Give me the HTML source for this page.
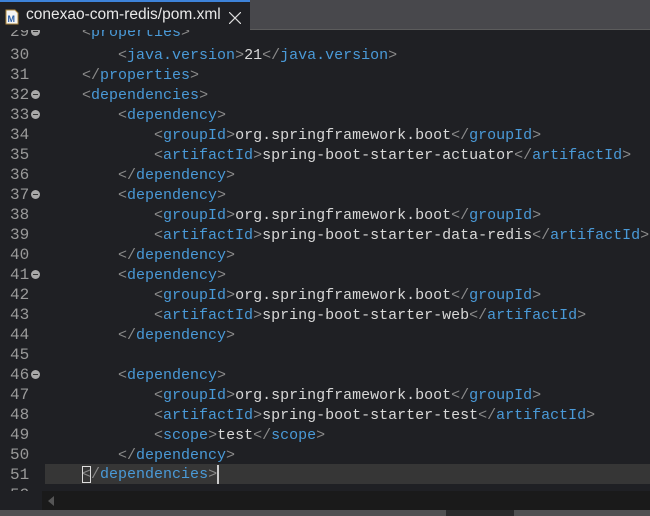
<!DOCTYPE html><html><head><style>
*{margin:0;padding:0}
body{width:650px;height:516px;overflow:hidden;background:#1f2024;position:relative;font-family:"Liberation Mono",monospace;font-size:15px}
.tabbar{position:absolute;left:0;top:0;width:650px;height:29px;background:#48484c;border-bottom:1px solid #5c5c5c}
.tab{position:absolute;left:0;top:0;width:250px;height:30px;background:#1f2024;border-top:2px solid #3d82d8;box-sizing:border-box}
.tab span{position:absolute;left:26px;top:4px;font-family:"Liberation Sans",sans-serif;font-size:15.5px;color:#e8e8e8}
.ed{position:absolute;left:0;top:30px;width:650px;height:461px;overflow:hidden}
.l{position:absolute;left:0;height:20px;line-height:20px;white-space:pre;width:650px}
.n{position:absolute;left:10px;top:1px;color:#9a9a9a;font-size:16px}
.c{position:absolute;left:46px;top:2px;color:#d8d8d8}
.b{color:#8a8a8a}.t{color:#4a9ad8}
.f{position:absolute;left:31px;top:6px;width:9px;height:9px;border-radius:50%;background:#a8a8a8}
.f:after{content:"";position:absolute;left:2px;top:4px;width:5px;height:1px;background:#333}
.hl{position:absolute;left:45px;top:434px;width:605px;height:20px;background:#363636}
</style></head><body>
<div class="tabbar"></div>
<div class="tab"><svg style="position:absolute;left:5px;top:7px" width="14" height="16"><path d="M1 1h9l3 3v11H1z" fill="#f4f4f4" stroke="#b08a40"/><text x="2.5" y="13" font-size="9" font-family="Liberation Sans" font-weight="bold" fill="#2c5fa8">M</text></svg><span>conexao-com-redis/pom.xml</span>
<svg style="position:absolute;left:229px;top:10px" width="12" height="12"><path d="M0 0L12 12M12 0L0 12" stroke="#ddd" stroke-width="1.2"/></svg></div>
<div class="ed">
<div class="hl"></div>
<div class="l" style="top:-9px"><span class="n">29</span><i class="f"></i><span class="c">    <span class="b">&lt;</span><span class="t">properties</span><span class="b">&gt;</span></span></div>
<div class="l" style="top:14px"><span class="n">30</span><span class="c">        <span class="b">&lt;</span><span class="t">java.version</span><span class="b">&gt;</span>21<span class="b">&lt;/</span><span class="t">java.version</span><span class="b">&gt;</span></span></div>
<div class="l" style="top:34px"><span class="n">31</span><span class="c">    <span class="b">&lt;/</span><span class="t">properties</span><span class="b">&gt;</span></span></div>
<div class="l" style="top:54px"><span class="n">32</span><i class="f"></i><span class="c">    <span class="b">&lt;</span><span class="t">dependencies</span><span class="b">&gt;</span></span></div>
<div class="l" style="top:74px"><span class="n">33</span><i class="f"></i><span class="c">        <span class="b">&lt;</span><span class="t">dependency</span><span class="b">&gt;</span></span></div>
<div class="l" style="top:94px"><span class="n">34</span><span class="c">            <span class="b">&lt;</span><span class="t">groupId</span><span class="b">&gt;</span>org.springframework.boot<span class="b">&lt;/</span><span class="t">groupId</span><span class="b">&gt;</span></span></div>
<div class="l" style="top:114px"><span class="n">35</span><span class="c">            <span class="b">&lt;</span><span class="t">artifactId</span><span class="b">&gt;</span>spring-boot-starter-actuator<span class="b">&lt;/</span><span class="t">artifactId</span><span class="b">&gt;</span></span></div>
<div class="l" style="top:134px"><span class="n">36</span><span class="c">        <span class="b">&lt;/</span><span class="t">dependency</span><span class="b">&gt;</span></span></div>
<div class="l" style="top:154px"><span class="n">37</span><i class="f"></i><span class="c">        <span class="b">&lt;</span><span class="t">dependency</span><span class="b">&gt;</span></span></div>
<div class="l" style="top:174px"><span class="n">38</span><span class="c">            <span class="b">&lt;</span><span class="t">groupId</span><span class="b">&gt;</span>org.springframework.boot<span class="b">&lt;/</span><span class="t">groupId</span><span class="b">&gt;</span></span></div>
<div class="l" style="top:194px"><span class="n">39</span><span class="c">            <span class="b">&lt;</span><span class="t">artifactId</span><span class="b">&gt;</span>spring-boot-starter-data-redis<span class="b">&lt;/</span><span class="t">artifactId</span><span class="b">&gt;</span></span></div>
<div class="l" style="top:214px"><span class="n">40</span><span class="c">        <span class="b">&lt;/</span><span class="t">dependency</span><span class="b">&gt;</span></span></div>
<div class="l" style="top:234px"><span class="n">41</span><i class="f"></i><span class="c">        <span class="b">&lt;</span><span class="t">dependency</span><span class="b">&gt;</span></span></div>
<div class="l" style="top:254px"><span class="n">42</span><span class="c">            <span class="b">&lt;</span><span class="t">groupId</span><span class="b">&gt;</span>org.springframework.boot<span class="b">&lt;/</span><span class="t">groupId</span><span class="b">&gt;</span></span></div>
<div class="l" style="top:274px"><span class="n">43</span><span class="c">            <span class="b">&lt;</span><span class="t">artifactId</span><span class="b">&gt;</span>spring-boot-starter-web<span class="b">&lt;/</span><span class="t">artifactId</span><span class="b">&gt;</span></span></div>
<div class="l" style="top:294px"><span class="n">44</span><span class="c">        <span class="b">&lt;/</span><span class="t">dependency</span><span class="b">&gt;</span></span></div>
<div class="l" style="top:314px"><span class="n">45</span></div>
<div class="l" style="top:334px"><span class="n">46</span><i class="f"></i><span class="c">        <span class="b">&lt;</span><span class="t">dependency</span><span class="b">&gt;</span></span></div>
<div class="l" style="top:354px"><span class="n">47</span><span class="c">            <span class="b">&lt;</span><span class="t">groupId</span><span class="b">&gt;</span>org.springframework.boot<span class="b">&lt;/</span><span class="t">groupId</span><span class="b">&gt;</span></span></div>
<div class="l" style="top:374px"><span class="n">48</span><span class="c">            <span class="b">&lt;</span><span class="t">artifactId</span><span class="b">&gt;</span>spring-boot-starter-test<span class="b">&lt;/</span><span class="t">artifactId</span><span class="b">&gt;</span></span></div>
<div class="l" style="top:394px"><span class="n">49</span><span class="c">            <span class="b">&lt;</span><span class="t">scope</span><span class="b">&gt;</span>test<span class="b">&lt;/</span><span class="t">scope</span><span class="b">&gt;</span></span></div>
<div class="l" style="top:414px"><span class="n">50</span><span class="c">        <span class="b">&lt;/</span><span class="t">dependency</span><span class="b">&gt;</span></span></div>
<div class="l" style="top:434px"><span class="n">51</span><span class="c" style="top:1px">    <span class="b" style="outline:1px solid #ddd;outline-offset:-1px">&lt;</span><span class="b">/</span><span class="t">dependencies</span><span class="b">&gt;</span><span style="display:inline-block;width:2px;height:19px;background:#ccc;vertical-align:top"></span></span></div>
<div class="l" style="top:454px"><span class="n">52</span></div>
</div>
<div style="position:absolute;left:42px;top:491px;width:608px;height:19px;background:#1a1a1a"></div>
<div style="position:absolute;left:48px;top:496px;width:0;height:0;border-top:5px solid transparent;border-bottom:5px solid transparent;border-right:6px solid #555"></div>
<div style="position:absolute;left:0;top:510px;width:650px;height:6px;background:#505052"></div>
<div style="position:absolute;left:446px;top:510px;width:68px;height:6px;background:#2a2a2c"></div>
</body></html>
